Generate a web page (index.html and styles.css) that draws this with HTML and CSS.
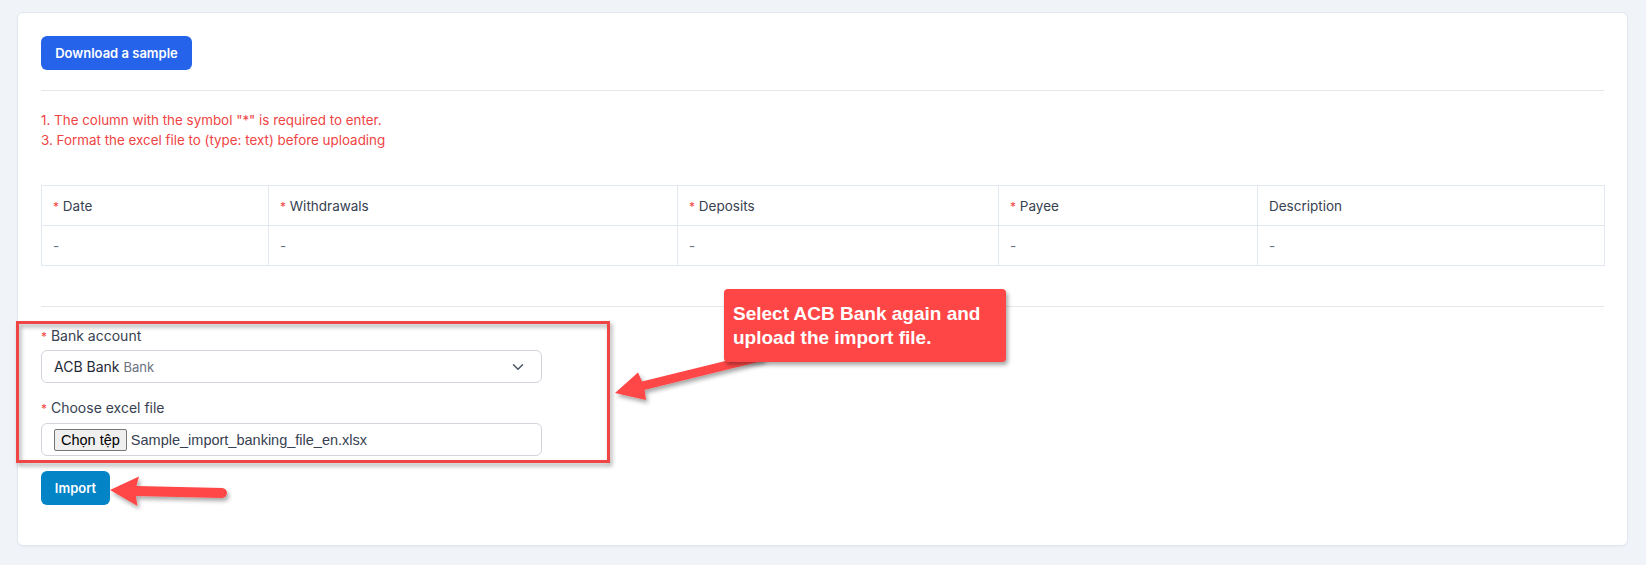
FILE: index.html
```html
<!DOCTYPE html>
<html lang="en">
<head>
    <meta charset="UTF-8">
    <meta name="viewport" content="width=device-width, initial-scale=1.0">
    <title>Import bank transactions</title>
    <link rel="stylesheet" href="styles.css">
</head>
<body>

<div class="page">
    <div class="card">
        <button class="btn btn-sample">Download a sample</button>
        <hr class="divider">
        <div class="notes">
            <p>1. The column with the symbol "*" is required to enter.</p>
            <p>3. Format the excel file to (type: text) before uploading</p>
        </div>
        <table class="preview">
            <colgroup>
                <col style="width: 227px">
                <col style="width: 409px">
                <col style="width: 321px">
                <col style="width: 259px">
                <col style="width: 347px">
            </colgroup>
            <thead>
                <tr>
                    <th><span class="req">*</span> Date</th>
                    <th><span class="req">*</span> Withdrawals</th>
                    <th><span class="req">*</span> Deposits</th>
                    <th><span class="req">*</span> Payee</th>
                    <th>Description</th>
                </tr>
            </thead>
            <tbody>
                <tr>
                    <td>-</td>
                    <td>-</td>
                    <td>-</td>
                    <td>-</td>
                    <td>-</td>
                </tr>
            </tbody>
        </table>
        <hr class="divider divider-form">
        <form class="import-form">
            <div class="field">
                <label><span class="req">*</span> Bank account</label>
                <div class="select">
                    <span class="select-value">ACB Bank <small>Bank</small></span>
                    <svg class="chevron" width="12" height="8" viewBox="0 0 12 8"><path d="M1.5 1.8 6 6.2l4.5-4.4" fill="none" stroke="#4b5563" stroke-width="1.5" stroke-linecap="round" stroke-linejoin="round"/></svg>
                </div>
            </div>
            <div class="field">
                <label><span class="req">*</span> Choose excel file</label>
                <div class="file-input">
                    <span class="file-button">Chọn tệp</span>
                    <span class="file-name">Sample_import_banking_file_en.xlsx</span>
                </div>
            </div>
            <button type="button" class="btn btn-import">Import</button>
        </form>
    </div>
</div>

<svg class="annotations" width="1646" height="565" viewBox="0 0 1646 565">
    <defs>
        <filter id="shadow" x="-20%" y="-20%" width="140%" height="140%">
            <feDropShadow dx="2" dy="3" stdDeviation="2" flood-color="#000" flood-opacity="0.35"/>
        </filter>
    </defs>
    <rect x="17.5" y="322.5" width="591" height="139" fill="none" stroke="#f04444" stroke-width="3" filter="url(#shadow)"/>
    <g fill="#ff4646" filter="url(#shadow)">
        <line x1="642" y1="386" x2="760" y2="357" stroke="#ff4646" stroke-width="9" stroke-linecap="round"/>
        <polygon points="615,393 638,372.5 644,386 646,400"/>
        <line x1="136" y1="491" x2="222" y2="493" stroke="#ff4646" stroke-width="10" stroke-linecap="round"/>
        <polygon points="110,490 139,476.5 135,491 137.5,506"/>
    </g>
</svg>

<div class="callout">Select ACB Bank again and<br>upload the import file.</div>

</body>
</html>
```

FILE: styles.css
```css
body {
    margin: 0;
    background-color: #f0f3f8;
    font-family: Inter, "Noto Sans", sans-serif;
    color: #374151;
    position: relative;
}
.page {
    padding: 12px 18px 20px 17px;
}
.card {
    background: #fff;
    border: 1px solid #e2e8f0;
    border-radius: 6px;
    padding: 23px 23px 40px 23px;
    box-shadow: 0 1px 2px rgba(15, 23, 42, 0.04);
}
.btn {
    display: block;
    border: none;
    border-radius: 6px;
    color: #fff;
    font-family: Inter, sans-serif;
    font-size: 13px;
    font-weight: 600;
    height: 34px;
    padding: 0 13px;
    cursor: pointer;
}
.btn-sample {
    background-color: #2563eb;
    width: 151px;
}
.btn-import {
    background-color: #0284c7;
    width: 69px;
    margin-top: 15px;
}
.divider {
    border: none;
    border-top: 1px solid #e5e7eb;
    margin: 20px 0 19px 0;
}
.divider-form {
    margin-top: 40px;
}
.notes {
    color: #ef4444;
    font-size: 13.4px;
    line-height: 20px;
    margin-bottom: 35px;
}
.notes p {
    margin: 0;
}
.req {
    color: #ef4444;
    font-size: 12px;
}
.preview {
    width: 1563px;
    border-collapse: collapse;
    table-layout: fixed;
    font-size: 13.5px;
}
.preview th, .preview td {
    border: 1px solid #e2e8f0;
    height: 39px;
    padding: 0 11px;
    text-align: left;
    font-weight: 400;
}
.preview th {
    color: #374151;
}
.preview td {
    color: #6b7280;
}
.import-form {
    display: flex;
    flex-direction: column;
    align-items: flex-start;
}
.field {
    display: flex;
    flex-direction: column;
    margin-bottom: 15px;
}
.field:last-of-type {
    margin-bottom: 0;
}
.field label {
    font-size: 14px;
    line-height: 20px;
    color: #374151;
    margin-bottom: 3px;
}
.field:last-of-type label {
    margin-bottom: 4px;
}
.select, .file-input {
    box-sizing: border-box;
    width: 501px;
    height: 33px;
    border: 1px solid #d1d5db;
    border-radius: 6px;
    display: flex;
    align-items: center;
    padding: 0 12px;
}
.select {
    justify-content: space-between;
}
.select-value {
    font-size: 14px;
    color: #1f2937;
}
.select-value small {
    font-size: 13px;
    color: #6b7280;
}
.chevron {
    margin-right: 5px;
}
.file-input {
    font-family: "Liberation Sans", Arial, sans-serif;
}
.file-button {
    box-sizing: border-box;
    height: 22px;
    line-height: 20px;
    padding: 0 6px;
    border: 1px solid #767676;
    border-radius: 2px;
    background: #efefef;
    color: #000;
    font-size: 14.5px;
    margin-right: 4px;
}
.file-name {
    color: #374151;
    font-size: 14.5px;
}
.annotations {
    position: absolute;
    left: 0;
    top: 0;
    pointer-events: none;
}
.callout {
    position: absolute;
    left: 724px;
    top: 289px;
    box-sizing: border-box;
    width: 282px;
    height: 73px;
    padding: 13px 9px 0 9px;
    background: #ff4646;
    border-radius: 4px;
    box-shadow: 2px 3px 4px rgba(0, 0, 0, 0.35);
    color: #fff;
    font-family: "Liberation Sans", Arial, sans-serif;
    font-size: 19px;
    font-weight: 700;
    line-height: 24px;
}
```
